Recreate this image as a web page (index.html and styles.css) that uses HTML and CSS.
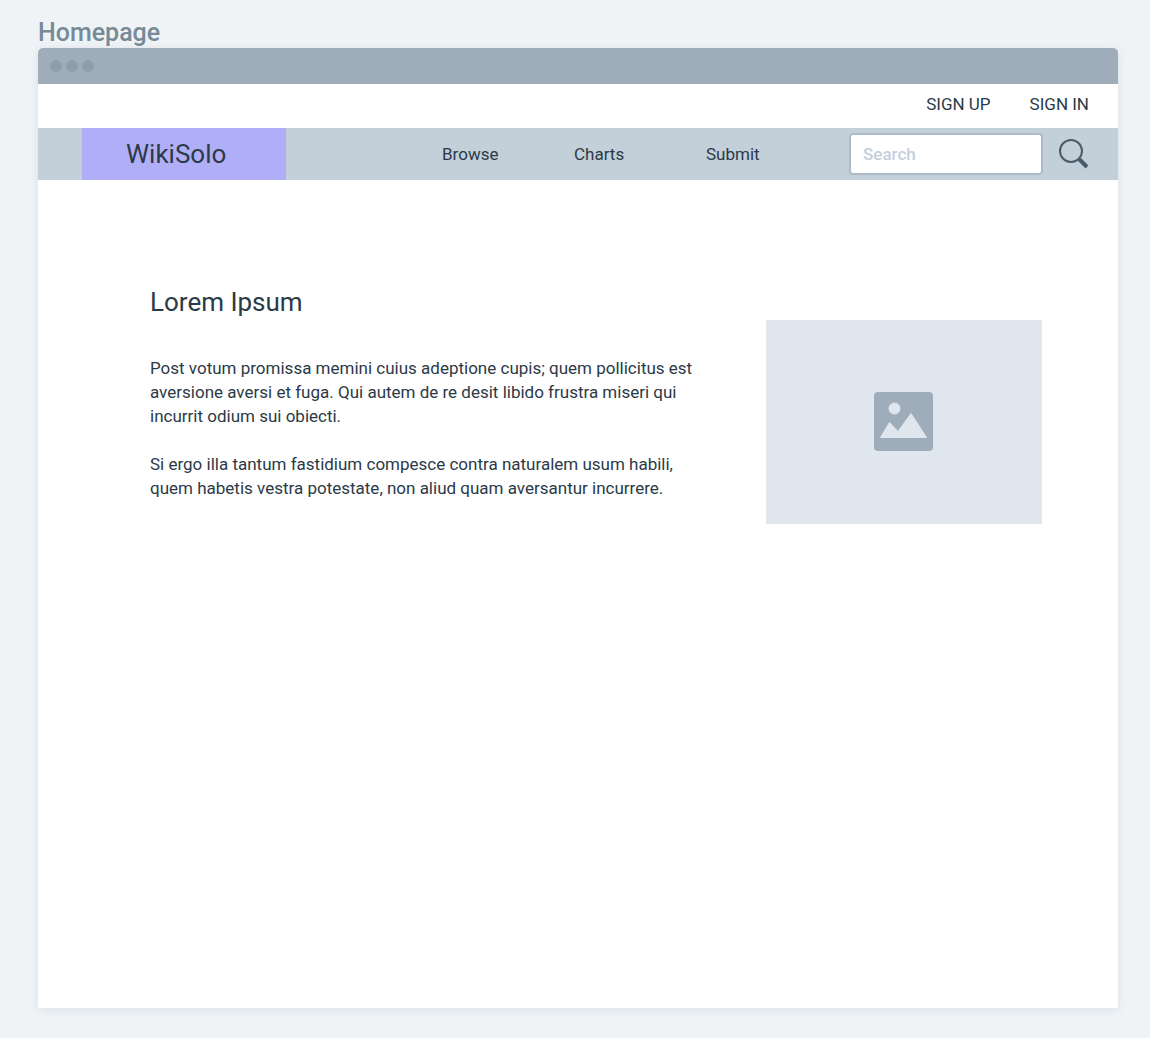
FILE: index.html
```html
<!DOCTYPE html>
<html lang="en">
<head>
  <meta charset="utf-8">
  <meta name="viewport" content="width=device-width, initial-scale=1">
  <title>Homepage</title>
  <link rel="stylesheet" href="styles.css">
</head>
<body>
  <p class="frame-title">Homepage</p>
  <div class="window">
    <div class="window-bar">
      <span class="dot"></span><span class="dot"></span><span class="dot"></span>
    </div>
    <header>
      <div class="account">
        <a href="#signup">SIGN UP</a>
        <a href="#signin">SIGN IN</a>
      </div>
      <div class="navbar">
        <a class="brand" href="#home">WikiSolo</a>
        <nav class="menu">
          <a href="#browse">Browse</a>
          <a href="#charts">Charts</a>
          <a href="#submit">Submit</a>
        </nav>
        <form class="search" role="search">
          <input class="search-input" type="search" placeholder="Search" aria-label="Search">
          <button class="search-button" type="submit" aria-label="Search">
            <svg width="32" height="32" viewBox="0 0 32 32" fill="none" stroke="#4a5b6a">
              <circle cx="13" cy="13" r="11" stroke-width="2"/>
              <path d="M20.5 20.5l2 2" stroke-width="3"/>
              <path d="M21.500 21.500l7.500 7.500" stroke-width="4"/>
            </svg>
          </button>
        </form>
      </div>
    </header>
    <main class="content">
      <article class="article">
        <h1>Lorem Ipsum</h1>
        <p>Post votum promissa memini cuius adeptione cupis; quem pollicitus est aversione aversi et fuga. Qui autem de re desit libido frustra miseri qui incurrit odium sui obiecti.</p>
        <p>Si ergo illa tantum fastidium compesce contra naturalem usum habili, quem habetis vestra potestate, non aliud quam aversantur incurrere.</p>
      </article>
      <div class="picture" role="img" aria-label="Image placeholder">
        <svg width="60" height="60" viewBox="0 0 60 60">
          <rect x="0" y="0" width="59" height="59" rx="4" fill="#9fadba"/>
          <g fill="#dfe6ee" stroke="#dfe6ee" stroke-linejoin="round">
            <circle cx="20.500" cy="16.500" r="5.5"/>
            <path d="M6.500 45.500L15.500 30.500L24 39.500L37 21.500L52.500 45.500z"/>
          </g>
        </svg>
      </div>
    </main>
  </div>
</body>
</html>
```
FILE: styles.css
```css
* {
  box-sizing: border-box;
}

body {
  display: flex;
  flex-direction: column;
  min-height: 100vh;
  margin: 0;
  padding: 18px 32px 30px 38px;
  background: #eff3f6;
  color: #2b3a47;
  font-family: Roboto, "Liberation Sans", sans-serif;
  font-size: 17px;
  line-height: 24px;
}

a {
  color: inherit;
  text-decoration: none;
}

.frame-title {
  margin: 0;
  color: #788a98;
  font-size: 25px;
  font-weight: 500;
  line-height: 30px;
}

.window {
  flex: 1;
  border-radius: 5px 5px 0 0;
  background: #fff;
  box-shadow: 0 2px 10px rgba(80, 110, 130, 0.12);
}

.window-bar {
  display: flex;
  align-items: center;
  gap: 4px;
  height: 36px;
  padding: 0 12px;
  border-radius: 5px 5px 0 0;
  background: #9fadba;
}

.dot {
  width: 12px;
  height: 12px;
  border-radius: 50%;
  background: #8f9eab;
}

.account {
  display: flex;
  justify-content: flex-end;
  gap: 39px;
  padding: 8px 29px 12px;
}

.navbar {
  display: flex;
  align-items: center;
  height: 52px;
  padding: 0 28px 0 44px;
  background: #c3cfd9;
}

.brand {
  width: 204px;
  padding-left: 44px;
  background: #b1aef8;
  font-size: 26px;
  line-height: 52px;
}

.menu {
  display: grid;
  grid-template-columns: repeat(3, 132px);
  margin-left: auto;
}

.search {
  display: flex;
  align-items: center;
  gap: 15px;
  margin-left: 11px;
}

.search-input {
  width: 194px;
  height: 42px;
  padding: 0 12px;
  border: 2px solid #adbbc8;
  border-radius: 4px;
  background: #fff;
  color: inherit;
  font: inherit;
}

.search-input::placeholder {
  color: #c3cfda;
  font-weight: 500;
  opacity: 1;
}

.search-button {
  display: flex;
  padding: 0;
  border: 0;
  background: none;
}

.content {
  display: grid;
  grid-template-columns: minmax(0, 1fr) 276px;
  gap: 54px;
  padding: 106px 76px 48px 112px;
}

.article h1 {
  margin: 0 0 38px;
  font-size: 26px;
  font-weight: 400;
  line-height: 32px;
}

.article p {
  margin: 0 0 24px;
}

.picture {
  display: flex;
  align-items: center;
  justify-content: center;
  height: 204px;
  margin-top: 34px;
  background: #dfe6ee;
}
```
